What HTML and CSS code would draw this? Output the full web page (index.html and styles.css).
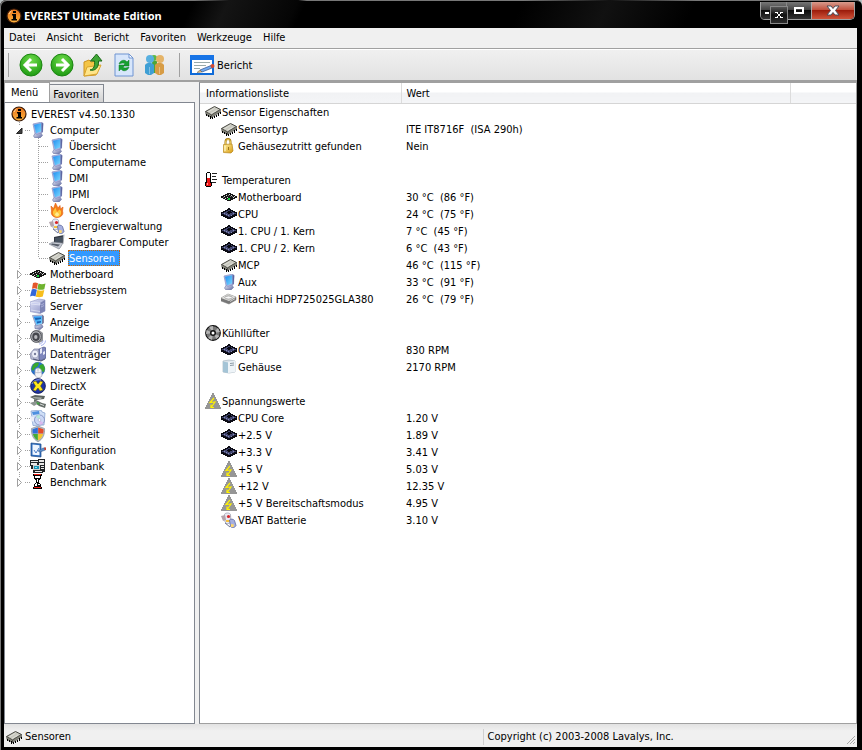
FILE: index.html
```html
<!DOCTYPE html>
<html lang="de">
<head>
  <meta charset="UTF-8">
  <meta name="viewport" content="width=device-width, initial-scale=1.0">
  <title>EVEREST Ultimate Edition</title>
  <link rel="stylesheet" href="styles.css">
</head>
<body>
<svg class="sprite" aria-hidden="true">
  <defs>
    <linearGradient id="gOrange" x1="0" y1="0" x2="0" y2="1"><stop offset="0" stop-color="#e8731c"/><stop offset="1" stop-color="#ffb43c"/></linearGradient>
    <linearGradient id="gScreen" x1="0" y1="0" x2="1" y2="1"><stop offset="0" stop-color="#1e8cf0"/><stop offset="1" stop-color="#7fdcff"/></linearGradient>
    <linearGradient id="gBase" x1="0" y1="0" x2="1" y2="1"><stop offset="0" stop-color="#f4f6ff"/><stop offset="1" stop-color="#5c659c"/></linearGradient>
    <linearGradient id="gServer" x1="0" y1="0" x2="1" y2="1"><stop offset="0" stop-color="#dfe2f8"/><stop offset="1" stop-color="#8d93c4"/></linearGradient>
    <radialGradient id="gGreen" cx=".5" cy=".3" r=".7"><stop offset="0" stop-color="#6fdc4a"/><stop offset="1" stop-color="#1d9a12"/></radialGradient>
    <linearGradient id="gGold" x1="0" y1="0" x2="1" y2="1"><stop offset="0" stop-color="#fff0a0"/><stop offset="1" stop-color="#d89a10"/></linearGradient>
  </defs>
  <symbol id="info" viewBox="0 0 16 16">
    <circle cx="8" cy="8" r="7" fill="url(#gOrange)" stroke="#3a1a08" stroke-width="1.200"/>
    <path d="M7 3h3v2H7zM6 6h4v5h1v1.500H5.500V11H7V7.500H6z" fill="#000"/>
    <path d="M3 6a5.500 5.500 0 0 1 2.500-3" fill="none" stroke="#ffd9a0"/>
  </symbol>
  <symbol id="pc" viewBox="0 0 16 16">
    <path d="M6 10l5 1 1.500 2.500L10 16H5l-1.500-2z" fill="url(#gBase)" stroke="#7a82ae" stroke-width=".7"/>
    <path d="M3 2l8-1.800 2 1-.5 9L7 12.500l-2-1z" fill="#aab3e0" stroke="#8690c4" stroke-width=".7"/>
    <path d="M4 2.800l7.200-1.500.3 8L6 11.300z" fill="url(#gScreen)"/>
    <path d="M11.500.5l1.700 1-.5 8.500-1.200.5z" fill="#5d66a0"/>
  </symbol>
  <symbol id="flame" viewBox="0 0 16 16">
    <path d="M2 4l2.500 2.500L6.500 1 9 6l2-2.500.5 3.500L14 5l-.5 4c1.500 4-2 6.500-5.500 6.500S1.500 13 2.500 9z" fill="#f47d1a" stroke="#e05a10" stroke-width=".6"/>
    <path d="M4 9.500l2.500-4L8 10l2.500-2.500L12 9c.5 4-1.500 6-4 6s-4.500-2.500-4-5.500z" fill="#ffc63a"/>
    <path d="M6 12l2-2 2 2c.5 2.500-4 3-4 0z" fill="#ffec90"/>
  </symbol>
  <symbol id="battery" viewBox="0 0 16 16">
    <path d="M3.500 2.500C4 .500 9 .500 9.500 2.500l.5 8-4 1.500-2-2z" fill="#e9eaf2" stroke="#9496a8" stroke-width=".7"/>
    <path d="M0 4l4-1 1 5-3 1z" fill="#b4a4ac"/>
    <circle cx="7.500" cy="4.500" r="1.600" fill="#d8262a"/>
    <path d="M5 8h4v2H5z" fill="#f5c040"/>
    <path d="M8.500 8c1-1.500 4-1 5 .500l1.500 5c-1 2.500-4.500 2.500-5.500 1z" fill="#a7b0e0" stroke="#616c9e" stroke-width=".8"/>
    <path d="M10 12l3 .500-.500 2.500H10z" fill="#ffd870"/>
    <path d="M4 11l5 4" stroke="#6f7694"/>
  </symbol>
  <symbol id="laptop" viewBox="0 0 16 16">
    <path d="M5 3l10-2-1 8-9 2z" fill="#30353f"/>
    <path d="M6 4l8-1.600-.800 5.600-7 1.600z" fill="#465260"/>
    <path d="M14 1l1.500-.500-1 9-.8.500z" fill="#a9adb5"/>
    <path d="M0 10l4-2 10 1-3 5-1 1z" fill="#c5c9d2" stroke="#767c88" stroke-width=".6"/>
    <path d="M3 9.500l8 1-2 2-7-2z" fill="#555c68"/>
  </symbol>
  <symbol id="chip" viewBox="0 0 16 16">
    <path d="M.5 7.500L9.500 2.500l6 3-9 5.500z" fill="#c9c9c0" stroke="#4a4a44"/>
    <path d="M.5 7.500l6 3.500v2.500l-5.500-3zM6.500 11l9-5.500v2.500l-9 5.500z" fill="#85857b" stroke="#4a4a44" stroke-width=".6"/>
    <path d="M3 8l6-3.500M6 9.500l6-3.500" stroke="#e7e7df" stroke-width=".7"/>
    <path d="M1 10h1v2H1zM3 11h1v2H3zM5 12h1v3H5zM7 13h1v2H7zM9 12h1v2H9zM11 11h1v2h-1zM13 9h1v3h-1zM15 8h1v2h-1z" fill="#000" shape-rendering="crispEdges"/>
  </symbol>
  <symbol id="board" viewBox="0 0 16 16" shape-rendering="crispEdges">
    <path d="M0 7h2V6h2V5h2V4h4v1h2v1h2v1h2v2h-2v1h-2v1h-2v1H6v-1H4v-1H2V9H0z" fill="#151515"/>
    <path d="M5 6h1v1H5zM8 5h1v1H8zM10 6h1v1h-1zM3 7h1v1H3zM12 8h1v1h-1zM6 8h1v1H6zM4 9h1v1H4zM13 7h1v1h-1z" fill="#ddd"/>
    <path d="M9 7h1v1H9zM7 6h1v1H7zM6 10h1v1H6zM11 7h1v1h-1zM2 8h1v1H2z" fill="#777"/>
    <path d="M7 9h2v2H7z" fill="#13cf39"/>
  </symbol>
  <symbol id="cpu" viewBox="0 0 16 16" shape-rendering="crispEdges">
    <path d="M0 6h2V5h2V4h2V3h1V2h2v1h1v1h2v1h2v1h2v4h-2v1h-2v1h-2v1H6v-1H4v-1H2v-1H0z" fill="#0b0b14"/>
    <path d="M1 7h2V6h2V5h2V4h2v1h2v1h2v1h2v1h-2v1h-2v1H9v1H7v-1H5V9H3V8H1z" fill="#41456e"/>
    <path d="M7 5h3v1h1v1H9v1H7V7H6V6h1z" fill="#080810"/>
    <path d="M3 7h1v1H3zM12 7h1v1h-1zM7 9h1v1H7zM10 9h1v1h-1zM5 8h1v1H5z" fill="#858bb8"/>
  </symbol>
  <symbol id="windows" viewBox="0 0 16 16">
    <path d="M3 1c2-1 3-.5 5 .3L6.800 7C5 6 4 6 2 6.800z" fill="#e4572b"/>
    <path d="M8.500 1.600c2 .8 4.500 1 7-.1l-1.200 5.700c-2.500 1-4.500.7-7 0z" fill="#6fb32f"/>
    <path d="M1.800 7.500c2-.8 3-.6 5.100.2L5.500 14.500c-2-1-3.500-1-5.500 0z" fill="#3467d8"/>
    <path d="M7.300 8c2.500.8 4.500 1 7 0l-1.500 6.500c-2.500 1-4.500.8-7 .2z" fill="#f7be1c"/>
  </symbol>
  <symbol id="server" viewBox="0 0 16 16">
    <path d="M0 4l9-3 6 1v11l-5 2.500-10-2z" fill="url(#gServer)" stroke="#999fc9" stroke-width=".7"/>
    <path d="M10 5l5-3v11l-5 2.500z" fill="#7d84b5"/>
    <path d="M1 4.500l9 .5v2L1 6zM1 12l9 1.500" fill="#c3c8ec" stroke="#f0f1fc" stroke-width=".6"/>
    <path d="M11 7l3-1.500M11 9l3-1.500" stroke="#b5bae0" stroke-width=".8"/>
  </symbol>
  <symbol id="display" viewBox="0 0 16 16">
    <path d="M5 11l3-1 4 1 1 2-3 2.500-5-1z" fill="url(#gBase)" stroke="#6870a0" stroke-width=".7"/>
    <path d="M2.500 1.500L12.500 1v9L6 12z" fill="#c6cbe8" stroke="#7f88b2" stroke-width=".7"/>
    <path d="M3.500 2.500l8.500-.4v7.400L6.500 11z" fill="url(#gScreen)"/>
    <path d="M5 4l6-.5v1.500L5.500 6zM7 7.500l4-.5v1.500l-4 1z" fill="#1b60b4"/>
    <path d="M12.500 1l1.200 1v7l-1.200 1z" fill="#4c557e"/>
  </symbol>
  <symbol id="speaker" viewBox="0 0 16 16">
    <path d="M3 1l6-1 4 3v8l-4 2-7-2-2-5z" fill="#8e9095"/>
    <ellipse cx="6" cy="6.500" rx="5.300" ry="5.800" fill="#b5b7bc" stroke="#54565c"/>
    <ellipse cx="6" cy="6.700" rx="3.700" ry="4.200" fill="#45474d"/>
    <ellipse cx="5.800" cy="7" rx="1.700" ry="2" fill="#b9babe"/>
    <path d="M9 14c2 0 4-1.500 4-3.500M11 15.500c2.500-.5 4.500-2.500 4.500-5" stroke="#a6b2f0" fill="none"/>
  </symbol>
  <symbol id="disk" viewBox="0 0 16 16">
    <path d="M0 8l4-5h5l2 8-2 4-8-2z" fill="#b9bcd4" stroke="#7a7fa0" stroke-width=".7"/>
    <ellipse cx="5" cy="8" rx="3.500" ry="4" fill="#eef0fa" stroke="#9398b5" stroke-width=".7"/>
    <circle cx="5" cy="8" r="1.200" fill="#777c9a"/>
    <path d="M9 3l5-2 2 1v10l-5 2.500-2-1z" fill="#7f87bc" stroke="#4f5788" stroke-width=".7"/>
    <path d="M10 3l2-1v5l-2 1zM13 6l2-1v3l-2 1z" fill="#e7e9f6"/>
    <path d="M3 13l8 2 4-2" stroke="#4f5575" fill="none"/>
  </symbol>
  <symbol id="network" viewBox="0 0 16 16">
    <circle cx="8" cy="7" r="6.800" fill="#2772cf" stroke="#1d4e9b" stroke-width=".5"/>
    <path d="M3 3c2-3 5-3 6-2L8 4 5 6 3 9 1.500 7zM10 3l3-1 2 4-1 4-3-1-2-3z" fill="#38a82c"/>
    <path d="M5 9c0-4 6-4 6.500 0l.5 4c0 3.500-6.500 3.500-7 0z" fill="#f3f4f8" stroke="#9aa1b5" stroke-width=".7"/>
    <path d="M8 6.500v3M5 10c2 1 4 1 6 0" stroke="#a0a6b8" stroke-width=".7" fill="none"/>
  </symbol>
  <symbol id="directx" viewBox="0 0 16 16">
    <circle cx="8" cy="8" r="7.400" fill="#1e34a6" stroke="#0a1450" stroke-width=".8"/>
    <path d="M2 6c1-3 5-5 9-4" stroke="#8ea4f0" fill="none"/>
    <path d="M3 4l3-1 2 3 2.500-3L13 4l-2.500 4L13 12l-3 1-2-3-2.500 3L3 12l2.500-4z" fill="#ffe71c" stroke="#5a5200" stroke-width=".5"/>
  </symbol>
  <symbol id="devices" viewBox="0 0 16 16">
    <path d="M0 3l5-2 10 1-1 3-8 1z" fill="#5b635f"/>
    <path d="M2 3l10 .5-1 1.500-6-.5z" fill="#a9b0ab"/>
    <path d="M4 5l8 4 4 1-1 4-6-2-5-4z" fill="#646c68"/>
    <path d="M0 9l6-2 3 2-5 3z" fill="#8d9591"/>
    <path d="M6 8l4 1-2 2z" fill="#3ba33b"/>
    <path d="M10 10l4 1.500" stroke="#d5dad7"/>
  </symbol>
  <symbol id="software" viewBox="0 0 16 16">
    <path d="M1 1l10-1 1 2 3 1-1 12-11 .500z" fill="#cfdff7" stroke="#7d9bcc" stroke-width=".7"/>
    <path d="M2 2l7-1 .5 3L3 5z" fill="#4d90e0"/>
    <path d="M0 6l4 1v4l-3 1z" fill="#eceff8"/>
    <circle cx="9.500" cy="10" r="5" fill="#cbd8f6" stroke="#7f8dbc" stroke-width=".8"/>
    <path d="M9.500 10L6 6.500a5 5 0 0 1 4-1.400z" fill="#b6e8d4"/>
    <path d="M9.500 10l4 3a5 5 0 0 1-4 2z" fill="#dab9ef"/>
    <circle cx="9.500" cy="10" r="1.400" fill="#fff" stroke="#8895bd" stroke-width=".5"/>
  </symbol>
  <symbol id="shield" viewBox="0 0 16 16">
    <path d="M8 0l6.500 2.500c.5 6-1.500 10.500-6.500 13.300C3 13 1 8.500 1.500 2.500z" fill="#b9bfc8" stroke="#7b838f" stroke-width=".6"/>
    <path d="M7.800 1.500v6H2.800c-.4-1.500-.4-3-.3-4.200z" fill="#3170d8"/>
    <path d="M8.200 1.500l5.300 1.800c.1 1.200 0 2.700-.3 4.200h-5z" fill="#e44b2a"/>
    <path d="M2.900 8h4.900v6.500C5.300 13 3.600 10.800 2.900 8z" fill="#45ad33"/>
    <path d="M8.200 8h4.900c-.7 2.800-2.400 5-4.900 6.500z" fill="#f8c62b"/>
  </symbol>
  <symbol id="config" viewBox="0 0 16 16">
    <path d="M1 1l10 1v13L1 14z" fill="#2f6fc0" stroke="#1d4988" stroke-width=".7"/>
    <path d="M2.500 2.500l7 .8v10l-7-.6z" fill="#eef5ff"/>
    <path d="M4 8l2 3 3-5" stroke="#4f80c8" fill="none"/>
    <path d="M8 9l5-3h2.500v2L10 10z" fill="#5f8fc8" stroke="#2f5588" stroke-width=".5"/>
    <path d="M14 5.500h2V8h-1.500z" fill="#c8402f"/>
  </symbol>
  <symbol id="database" viewBox="0 0 16 16" shape-rendering="crispEdges">
    <path d="M0 2h8V1h7v13h-2v1H3v-4H1V8H0z" fill="#202428"/>
    <path d="M1 3h7v1H1zM1 5h6v2H1zM9 2h5v2H9zM9 5h5v2H9zM11 8h3v1h-3zM11 10h3v1h-3zM5 13h7v1H5z" fill="#e7e7e7"/>
    <path d="M3 7h7v5H3z" fill="#d0d0d0"/>
    <path d="M4 8h5v3H4z" fill="#1893b6"/>
    <path d="M5 9h2v1H5z" fill="#8af0ff"/>
  </symbol>
  <symbol id="hourglass" viewBox="0 0 16 16" shape-rendering="crispEdges">
    <path d="M3 0h9v2H3zM3 13h9v2H3z" fill="#000"/>
    <path d="M4 0h7v1H4zM4 13h7v1H4z" fill="#f01c14"/>
    <path d="M4 2h7v3h-1v1H9v3h1v1h1v3H4v-3h1V9h1V6H5V5H4z" fill="#000"/>
    <path d="M5 2h5v2H5zM7 5h1v3H7zM6 9h1v1H6zM5 10h2v2H5zM8 10h2v1H8z" fill="#fff"/>
  </symbol>
  <symbol id="lock" viewBox="0 0 16 16">
    <path d="M4.500 7V4c0-4 5-4 5 0v3" fill="none" stroke="#a87b12" stroke-width="2"/>
    <path d="M4.500 7V4c0-3.500 5-3.500 5 0v3" fill="none" stroke="#f1d56a" stroke-width=".8"/>
    <path d="M2.500 6.500L11 6l1 7-2 2-7.500-.5z" fill="url(#gGold)" stroke="#b88518" stroke-width=".7"/>
    <path d="M7 9h1v3H7z" fill="#9b7618"/>
    <path d="M4 8v5" stroke="#fffbd5"/>
  </symbol>
  <symbol id="thermo" viewBox="0 0 16 16" shape-rendering="crispEdges">
    <path d="M2 0h3v1h1v9h1v4H6v1H1v-1H0v-4h1V1h1z" fill="#000"/>
    <path d="M2 1h3v6H2z" fill="#fff"/>
    <path d="M2 6h3v5h1v3H1v-3h1z" fill="#ee1515"/>
    <path d="M2 11h1v2H2z" fill="#ff9a9a"/>
    <path d="M7 1h5v1H7zM7 4h4v1H7zM7 7h5v1H7zM7 10h4v1H7z" fill="#222"/>
  </symbol>
  <symbol id="drive" viewBox="0 0 16 16">
    <path d="M0 7l7-4 8 3v3l-7 4-8-3z" fill="#777" stroke="#777" stroke-width=".5"/>
    <path d="M0 7l7-4 8 3-7 4z" fill="#dededb"/>
    <ellipse cx="7.500" cy="6.500" rx="3.600" ry="1.600" fill="#f7f7f7" stroke="#888" stroke-width=".7"/>
    <path d="M9 10.500l5-2.800" stroke="#ccc"/>
  </symbol>
  <symbol id="fan" viewBox="0 0 16 16">
    <circle cx="8" cy="8" r="7.300" fill="#777" stroke="#111" stroke-width="1.200"/>
    <path d="M8 8L4 1.800 8 1zM8 8l5-5 2 4zM8 8l6.500 3-3 3zM8 8l-1 7-4-2zM8 8L1 9l.5-4z" fill="#b4b4b4"/>
    <circle cx="8" cy="8" r="3" fill="#111"/>
    <circle cx="8" cy="8" r="1.500" fill="#fff"/>
  </symbol>
  <symbol id="case" viewBox="0 0 16 16">
    <path d="M2 2l6-1 6 1v11l-6 1-6-1z" fill="#dbe4ea" stroke="#a9b8c2" stroke-width=".7"/>
    <path d="M7 3l7-1v11l-7 1z" fill="#eef4f8"/>
    <path d="M2 2.500l5 1V14l-5-1z" fill="#a4c4d6"/>
    <path d="M9 4.500l4-.5M9 6.500l4-.5" stroke="#71838f" stroke-width=".8"/>
  </symbol>
  <symbol id="volt" viewBox="0 0 16 16">
    <path d="M7 0h2v2h1v2h1v2h1v2h1v2h1v2h1v2h1v2H0v-2h1v-2h1v-2h1V8h1V6h1V4h1V2h1z" fill="#969696" shape-rendering="crispEdges"/>
    <path d="M9 5L5 9.500l5-.5-3.500 5M6 11.500V14.500h3" fill="none" stroke="#fff200" stroke-width="1.200"/>
  </symbol>
  <symbol id="closed" viewBox="0 0 9 9"><path d="M2.500.500v8l4-4z" fill="#fff" stroke="#a0a0a0"/></symbol>
  <symbol id="opened" viewBox="0 0 9 9"><path d="M7 2v5.500H1.500z" fill="#404040" stroke="#262626"/></symbol>
</svg>

<div class="window">
  <header class="titlebar">
    <svg class="icon"><use href="#info"/></svg>
    <h1>EVEREST Ultimate Edition</h1>
    <div class="window-buttons">
      <button class="minimize" aria-label="Minimieren"><svg width="20" height="10"><path d="M1 6h4v2H1z" fill="#fff"/></svg></button>
      <button class="maximize" aria-label="Maximieren"><svg width="12" height="10"><path d="M2 2h8v5H2z" fill="none" stroke="#fff" stroke-width="2"/></svg></button>
      <button class="close" aria-label="Schließen"><svg width="14" height="11"><path d="M1 1h4l2 2.500L9 1h4L9.500 5.500 13 10H9L7 7.500 5 10H1l3.500-4.500z" fill="#fff" stroke="#4c4c58"/></svg></button>
      <button class="badge" aria-label="Ausblenden"><svg width="8" height="8"><path d="M0 1.500h3M5 1.500h3M0 6.500h3M5 6.500h3M2 2l4 4M6 2L2 6" stroke="#fff" fill="none"/></svg></button>
    </div>
  </header>

  <nav class="menubar">
    <button>Datei</button>
    <button>Ansicht</button>
    <button>Bericht</button>
    <button>Favoriten</button>
    <button>Werkzeuge</button>
    <button>Hilfe</button>
  </nav>

  <div class="toolbar">
    <span class="separator"></span>
    <div class="tools">
      <button aria-label="Zurück"><svg viewBox="0 0 24 24"><circle cx="12" cy="12" r="11" fill="url(#gGreen)" stroke="#1b8511"/><path d="M12 6l-6 6 6 6M6.500 12H18" fill="none" stroke="#fff" stroke-width="3"/></svg></button>
      <button aria-label="Vorwärts"><svg viewBox="0 0 24 24"><circle cx="12" cy="12" r="11" fill="url(#gGreen)" stroke="#1b8511"/><path d="M12 6l6 6-6 6M17.500 12H6" fill="none" stroke="#fff" stroke-width="3"/></svg></button>
      <button aria-label="Nach oben"><svg viewBox="0 0 24 24"><path d="M3 9l5-2 2 2 5-1v3l3 1-3 10-12 1z" fill="#f4c546" stroke="#cc9320"/><path d="M6 14l14-2-4 9-13 2z" fill="#ffe58a" stroke="#d9a52e"/><path d="M9 17c4-1 5-4 4.500-9H9.500L15.500 1 21 8h-3.500c.5 6-3 10.500-8.500 9z" fill="#3fa636" stroke="#1c6a18"/></svg></button>
      <button aria-label="Aktualisieren"><svg viewBox="0 0 24 24"><path d="M3 1h14l4 4v18H3z" fill="#d7e6fb" stroke="#6f94d2"/><path d="M17 1l4 4h-4z" fill="#fff" stroke="#6f94d2"/><path d="M7 11c1-4 6-5 8-2l2-2v6h-6l2-2c-1-1.500-3-1-6 0zM17 14c-1 4-6 5-8 2l-2 2v-6h6l-2 2c1 1.500 3 1 6 0z" fill="#17a032" stroke="#0d7d22" stroke-width=".5"/></svg></button>
      <button aria-label="Benutzer"><svg viewBox="0 0 24 24"><circle cx="11" cy="5" r="3" fill="#5db846"/><path d="M9 8h5v12H9z" fill="#4da638"/><circle cx="7" cy="6" r="4" fill="#58b0e0"/><path d="M2 12c2-3 7-3 9 0v8l-3 2H5l-3-2z" fill="#3f9fd4"/><circle cx="17" cy="6" r="4" fill="#e5b468"/><path d="M12 12c2-3 7-3 9 0v8l-3 2h-3l-3-2z" fill="#d79c45"/><path d="M6.500 14v7M16.500 14v7" stroke="#fff" opacity=".35"/></svg></button>
    </div>
    <span class="separator"></span>
    <button class="report">
      <svg viewBox="0 0 25 20"><path d="M1 1h22v18H1z" fill="#fff" stroke="#0f6bd8" stroke-width="2"/><path d="M0 0h24v5H0z" fill="#1673e6"/><path d="M4 7.500h16M4 10.500h12M4 13.500h6" stroke="#9aa"/><path d="M10 15l11-4.500 1 2.500-10 4z" fill="#74acf0" stroke="#2a4f8c" stroke-width=".7"/><path d="M7 17.500l3-2.500 2 2z" fill="#ecc07a" stroke="#555" stroke-width=".5"/><circle cx="22.500" cy="11" r="2" fill="#d34a32"/></svg>
      <span>Bericht</span>
    </button>
  </div>

  <main class="panes">
    <section class="sidebar">
      <div class="tabs" role="tablist">
        <button class="tab active" role="tab" aria-selected="true">Menü</button>
        <button class="tab" role="tab" aria-selected="false">Favoriten</button>
      </div>
      <div class="tree">
        <a class="node root" href="#"><svg class="icon"><use href="#info"/></svg><span class="label">EVEREST v4.50.1330</span></a>
        <ul class="level1">
          <li>
            <div class="node"><button class="toggle" aria-label="Computer"><svg><use href="#opened"/></svg></button><span class="dots"></span><svg class="icon"><use href="#pc"/></svg><a class="label" href="#">Computer</a></div>
            <ul class="level2">
              <li class="node"><span class="dots"></span><svg class="icon"><use href="#pc"/></svg><a class="label" href="#">Übersicht</a></li>
              <li class="node"><span class="dots"></span><svg class="icon"><use href="#pc"/></svg><a class="label" href="#">Computername</a></li>
              <li class="node"><span class="dots"></span><svg class="icon"><use href="#pc"/></svg><a class="label" href="#">DMI</a></li>
              <li class="node"><span class="dots"></span><svg class="icon"><use href="#pc"/></svg><a class="label" href="#">IPMI</a></li>
              <li class="node"><span class="dots"></span><svg class="icon"><use href="#flame"/></svg><a class="label" href="#">Overclock</a></li>
              <li class="node"><span class="dots"></span><svg class="icon"><use href="#battery"/></svg><a class="label" href="#">Energieverwaltung</a></li>
              <li class="node"><span class="dots"></span><svg class="icon"><use href="#laptop"/></svg><a class="label" href="#">Tragbarer Computer</a></li>
              <li class="node"><span class="dots"></span><svg class="icon"><use href="#chip"/></svg><a class="label selected" href="#">Sensoren</a></li>
            </ul>
          </li>
          <li class="node"><button class="toggle" aria-label="Motherboard"><svg><use href="#closed"/></svg></button><span class="dots"></span><svg class="icon"><use href="#board"/></svg><a class="label" href="#">Motherboard</a></li>
          <li class="node"><button class="toggle" aria-label="Betriebssystem"><svg><use href="#closed"/></svg></button><span class="dots"></span><svg class="icon"><use href="#windows"/></svg><a class="label" href="#">Betriebssystem</a></li>
          <li class="node"><button class="toggle" aria-label="Server"><svg><use href="#closed"/></svg></button><span class="dots"></span><svg class="icon"><use href="#server"/></svg><a class="label" href="#">Server</a></li>
          <li class="node"><button class="toggle" aria-label="Anzeige"><svg><use href="#closed"/></svg></button><span class="dots"></span><svg class="icon"><use href="#display"/></svg><a class="label" href="#">Anzeige</a></li>
          <li class="node"><button class="toggle" aria-label="Multimedia"><svg><use href="#closed"/></svg></button><span class="dots"></span><svg class="icon"><use href="#speaker"/></svg><a class="label" href="#">Multimedia</a></li>
          <li class="node"><button class="toggle" aria-label="Datenträger"><svg><use href="#closed"/></svg></button><span class="dots"></span><svg class="icon"><use href="#disk"/></svg><a class="label" href="#">Datenträger</a></li>
          <li class="node"><button class="toggle" aria-label="Netzwerk"><svg><use href="#closed"/></svg></button><span class="dots"></span><svg class="icon"><use href="#network"/></svg><a class="label" href="#">Netzwerk</a></li>
          <li class="node"><button class="toggle" aria-label="DirectX"><svg><use href="#closed"/></svg></button><span class="dots"></span><svg class="icon"><use href="#directx"/></svg><a class="label" href="#">DirectX</a></li>
          <li class="node"><button class="toggle" aria-label="Geräte"><svg><use href="#closed"/></svg></button><span class="dots"></span><svg class="icon"><use href="#devices"/></svg><a class="label" href="#">Geräte</a></li>
          <li class="node"><button class="toggle" aria-label="Software"><svg><use href="#closed"/></svg></button><span class="dots"></span><svg class="icon"><use href="#software"/></svg><a class="label" href="#">Software</a></li>
          <li class="node"><button class="toggle" aria-label="Sicherheit"><svg><use href="#closed"/></svg></button><span class="dots"></span><svg class="icon"><use href="#shield"/></svg><a class="label" href="#">Sicherheit</a></li>
          <li class="node"><button class="toggle" aria-label="Konfiguration"><svg><use href="#closed"/></svg></button><span class="dots"></span><svg class="icon"><use href="#config"/></svg><a class="label" href="#">Konfiguration</a></li>
          <li class="node"><button class="toggle" aria-label="Datenbank"><svg><use href="#closed"/></svg></button><span class="dots"></span><svg class="icon"><use href="#database"/></svg><a class="label" href="#">Datenbank</a></li>
          <li class="node"><button class="toggle" aria-label="Benchmark"><svg><use href="#closed"/></svg></button><span class="dots"></span><svg class="icon"><use href="#hourglass"/></svg><a class="label" href="#">Benchmark</a></li>
        </ul>
      </div>
    </section>

    <section class="details">
      <table>
        <colgroup><col class="col-name"><col class="col-value"><col></colgroup>
        <thead>
          <tr><th>Informationsliste</th><th>Wert</th><th></th></tr>
        </thead>
        <tbody>
          <tr class="group"><td><svg class="icon"><use href="#chip"/></svg>Sensor Eigenschaften</td><td></td></tr>
          <tr><td><svg class="icon"><use href="#chip"/></svg>Sensortyp</td><td>ITE IT8716F&nbsp; (ISA 290h)</td></tr>
          <tr><td><svg class="icon"><use href="#lock"/></svg>Gehäusezutritt gefunden</td><td>Nein</td></tr>
        </tbody>
        <tbody>
          <tr class="group"><td><svg class="icon"><use href="#thermo"/></svg>Temperaturen</td><td></td></tr>
          <tr><td><svg class="icon"><use href="#board"/></svg>Motherboard</td><td>30 °C&nbsp; (86 °F)</td></tr>
          <tr><td><svg class="icon"><use href="#cpu"/></svg>CPU</td><td>24 °C&nbsp; (75 °F)</td></tr>
          <tr><td><svg class="icon"><use href="#cpu"/></svg>1. CPU / 1. Kern</td><td>7 °C&nbsp; (45 °F)</td></tr>
          <tr><td><svg class="icon"><use href="#cpu"/></svg>1. CPU / 2. Kern</td><td>6 °C&nbsp; (43 °F)</td></tr>
          <tr><td><svg class="icon"><use href="#chip"/></svg>MCP</td><td>46 °C&nbsp; (115 °F)</td></tr>
          <tr><td><svg class="icon"><use href="#pc"/></svg>Aux</td><td>33 °C&nbsp; (91 °F)</td></tr>
          <tr><td><svg class="icon"><use href="#drive"/></svg>Hitachi HDP725025GLA380</td><td>26 °C&nbsp; (79 °F)</td></tr>
        </tbody>
        <tbody>
          <tr class="group"><td><svg class="icon"><use href="#fan"/></svg>Kühllüfter</td><td></td></tr>
          <tr><td><svg class="icon"><use href="#cpu"/></svg>CPU</td><td>830 RPM</td></tr>
          <tr><td><svg class="icon"><use href="#case"/></svg>Gehäuse</td><td>2170 RPM</td></tr>
        </tbody>
        <tbody>
          <tr class="group"><td><svg class="icon"><use href="#volt"/></svg>Spannungswerte</td><td></td></tr>
          <tr><td><svg class="icon"><use href="#cpu"/></svg>CPU Core</td><td>1.20 V</td></tr>
          <tr><td><svg class="icon"><use href="#cpu"/></svg>+2.5 V</td><td>1.89 V</td></tr>
          <tr><td><svg class="icon"><use href="#cpu"/></svg>+3.3 V</td><td>3.41 V</td></tr>
          <tr><td><svg class="icon"><use href="#volt"/></svg>+5 V</td><td>5.03 V</td></tr>
          <tr><td><svg class="icon"><use href="#volt"/></svg>+12 V</td><td>12.35 V</td></tr>
          <tr><td><svg class="icon"><use href="#volt"/></svg>+5 V Bereitschaftsmodus</td><td>4.95 V</td></tr>
          <tr><td><svg class="icon"><use href="#battery"/></svg>VBAT Batterie</td><td>3.10 V</td></tr>
        </tbody>
      </table>
    </section>
  </main>

  <footer class="statusbar">
    <div class="status"><svg class="icon"><use href="#chip"/></svg>Sensoren</div>
    <div class="copyright">Copyright (c) 2003-2008 Lavalys, Inc.</div>
    <svg class="grip" viewBox="0 0 10 10"><path d="M1 9l8-8M4 9l5-5M7 9l2-2" stroke="#a8a8a8"/></svg>
  </footer>
</div>
</body>
</html>
```
FILE: styles.css
```css
:root {
  --face: #f0f0f0;
  --line: #828790;
  --highlight: #3399ff;
  --dots: #a0a0a0;
}
* { box-sizing: border-box; }
body { margin: 0; background: #b9c0c2; color: #000; font: 11px/16px "DejaVu Sans Condensed", "Noto Sans", sans-serif; }
button { margin: 0; padding: 0; border: 0; background: none; color: inherit; font: inherit; cursor: pointer; }
a { color: inherit; text-decoration: none; }
ul { margin: 0; padding: 0; list-style: none; }
svg { display: block; flex: none; }
.sprite { position: absolute; width: 0; height: 0; }
.icon { width: 16px; height: 16px; }

/* window frame */
.window { display: flex; flex-direction: column; min-height: 100vh; padding: 0 5px 3px 4px; background: #000; border-radius: 6px 6px 0 0; box-shadow: inset 1px 1px 0 #777; }
.titlebar { display: flex; align-items: center; height: 28px; padding: 4px 0 0 2px; background: linear-gradient(115deg, transparent 22%, #141414 26%, #050505 34%, transparent 35%, transparent 60%, #111 70%, transparent 80%); color: #fff; }
.titlebar h1 { flex: 1; margin: 0 0 0 2px; font: bold 11px/16px "Noto Sans", sans-serif; }
.window-buttons { position: relative; display: flex; align-self: flex-start; height: 18px; margin: -2px 2px 0 0; border: 1px solid #a0a0a0; border-top: 0; border-radius: 0 0 5px 5px; }
.window-buttons button { display: flex; align-items: center; justify-content: center; height: 17px; background: linear-gradient(#777, #444 45%, #0c0c0c 50%, #333); }
.window-buttons .minimize { width: 25px; border-radius: 0 0 0 4px; }
.window-buttons .maximize { width: 25px; border-left: 1px solid #888; }
.window-buttons .close { width: 43px; border-left: 1px solid #aaa; border-radius: 0 0 4px 0; background: linear-gradient(#d79b8e, #c2523e 45%, #9c1d0c 50%, #d0543a); }
.window-buttons .badge { position: absolute; top: 4px; left: 9px; width: 18px; height: 18px; border: 1px solid #888; background: linear-gradient(#555, #111 50%, #2c2c2c); }

/* menu and toolbar */
.menubar { display: flex; gap: 11px; height: 21px; padding: 0 5px; background: var(--face); border-bottom: 1px solid #a0a0a0; }
.menubar button { height: 20px; }
.toolbar { display: flex; align-items: center; height: 33px; padding: 0 4px; background: linear-gradient(#f0f0f0, #e2e2e2); border-top: 1px solid #fff; border-bottom: 2px solid #a0a0a0; }
.separator { width: 1px; height: 24px; background: #a0a0a0; }
.tools { display: flex; gap: 7px; margin: 0 12px 0 10px; }
.tools svg { width: 24px; height: 24px; }
.report { display: flex; align-items: center; gap: 2px; margin-left: 10px; }
.report svg { width: 25px; height: 20px; }
.report span { padding-top: 2px; }

/* panes */
.panes { display: flex; flex: 1; gap: 4px; background: var(--face); }
.sidebar { display: flex; flex-direction: column; width: 191px; }
.tabs { display: flex; align-items: flex-end; height: 20px; }
.tab { height: 18px; padding: 2px 4px 0 3px; border: 1px solid var(--line); border-width: 1px 1px 0 0; background: linear-gradient(#f2f2f2, #d2d2d2); }
.tab.active { height: 21px; margin-bottom: -1px; padding: 0 11px 1px 6px; border-left-width: 1px; border-color: #a0a0a0; background: #fff; }
.tree { flex: 1; padding: 3px 0; background: #fff; border: 1px solid var(--line); }
.node { display: flex; align-items: center; height: 16px; padding-left: 10px; }
.root { padding-left: 6px; }
.level1, .level2 { background: repeating-linear-gradient(var(--dots) 0 1px, transparent 1px 2px) no-repeat; }
.level1 { background-size: 1px calc(100% - 8px); background-position: 14px 0; }
.level2 { background-size: 1px calc(100% - 8px); background-position: 33px 0; }
.level2 .node { padding-left: 33px; }
.toggle { width: 9px; height: 9px; background: #fff; }
.toggle svg { width: 9px; height: 9px; }
.dots { width: 6px; height: 1px; background: repeating-linear-gradient(90deg, transparent 0 1px, var(--dots) 1px 2px); }
.level2 .dots { width: 11px; }
.label { height: 16px; margin-left: 3px; padding-right: 4px; border: 1px solid transparent; line-height: 16px; white-space: nowrap; }
.label.selected { background: var(--highlight); border: 1px dotted #cc6600; color: #fff; }

/* sensor list */
.details { flex: 1; background: #fff; border: 1px solid #a0a0a0; border-left-color: var(--line); }
table { width: 100%; border-collapse: collapse; table-layout: fixed; }
.col-name { width: 201px; }
.col-value { width: 389px; }
th { height: 20px; padding: 2px 5px 0; border-right: 1px solid #dcdcdc; border-bottom: 1px solid #d5d5d5; background: linear-gradient(#fff 45%, #f1f2f4 50%, #f4f5f7); font-weight: normal; text-align: left; }
th:first-child { padding-left: 6px; }
th:last-child { border-right: 0; }
td { height: 17px; padding: 1px 5px 0; line-height: 16px; white-space: nowrap; }
td:first-child { padding-left: 21px; }
.group td:first-child { padding-left: 5px; }
td .icon { display: inline-block; margin: -1px 1px 0 0; vertical-align: top; }
tbody + tbody::before { content: ""; display: table-row; height: 17px; }
thead::after { content: ""; display: table-row; height: 1px; }

/* status bar */
.statusbar { display: flex; align-items: center; height: 23px; padding: 2px 0 0 2px; background: linear-gradient(#e2e2e2, #f0f0f0 30%); }
.status { display: flex; align-items: center; gap: 3px; width: 56%; }
.copyright { flex: 1; padding-left: 4px; border-left: 1px solid #d0d0d0; }
.grip { align-self: flex-end; width: 10px; height: 10px; margin: 0 1px 2px 0; }
```
